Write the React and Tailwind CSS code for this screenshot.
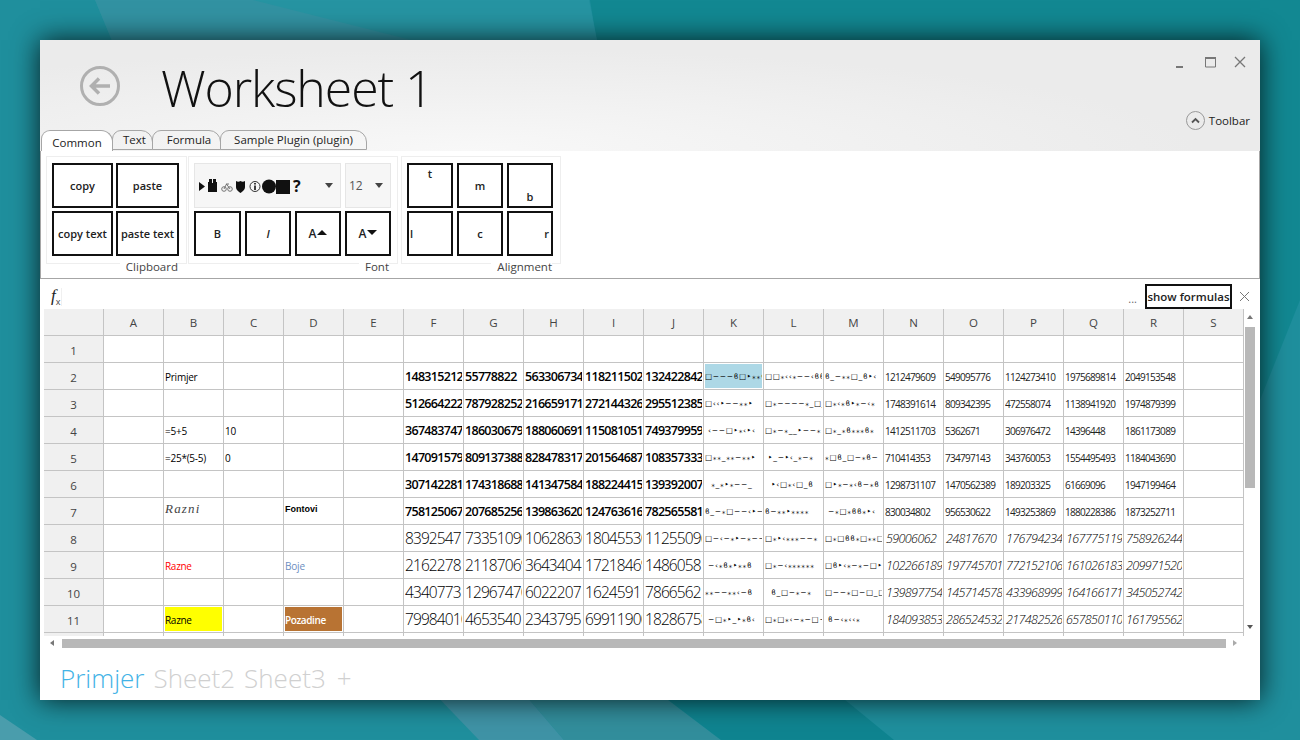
import React from "react";

const columns = ["A", "B", "C", "D", "E", "F", "G", "H", "I", "J", "K", "L", "M", "N", "O", "P", "Q", "R", "S"];

const boldNums = [
  ["1483152120", "55778822", "563306734", "1182115022", "132422842"],
  ["512664222", "787928252", "216659171", "272144326", "295512385"],
  ["367483747", "186030679", "1880606918", "1150810513", "749379959"],
  ["1470915799", "809137388", "828478317", "201564687", "108357333"],
  ["307142281", "1743186888", "141347584", "1882244153", "1393920074"],
  ["758125067", "207685256", "139863620", "1247636160", "782565581"],
];

const bigNums = [
  ["8392547", "73351090", "10628630", "18045530", "11255096"],
  ["21622781", "21187069", "3643404", "17218469", "1486058"],
  ["4340773", "12967470", "6022207", "16245911", "7866562"],
  ["79984010", "4653540", "2343795", "69911900", "18286758"],
];

const smallNums = [
  ["1212479609", "549095776", "1124273410", "1975689814", "2049153548"],
  ["1748391614", "809342395", "472558074", "1138941920", "1974879399"],
  ["1412511703", "5362671", "306976472", "14396448", "1861173089"],
  ["710414353", "734797143", "343760053", "1554495493", "1184043690"],
  ["1298731107", "1470562389", "189203325", "61669096", "1947199464"],
  ["830034802", "956530622", "1493253869", "1880228386", "1873252711"],
];

const italicNums = [
  ["59006062", "24817670", "1767942344", "1677751197", "7589262448"],
  ["1022661892", "197745701", "772152106", "1610261834", "2099715209"],
  ["1398977541", "1457145786", "433968999", "1641661713", "345052742"],
  ["1840938534", "286524532", "217482526", "657850110", "1617955623"],
];

// the K-M columns are in a symbol font in the original
const symbols = [
  ["□−−−ϐ□‣⁎⁎‣", "□□⁎‹‹⁎−−‹ϐϐ_", "ϐ_−⁎⁎□_ϐ‣‹"],
  ["□‹‹‣−−⁎⁎‣", "□⁎−−−−⁎_□_", "□⁎‹⁎ϐ‣⁎−‹⁎"],
  [" ‹−−□‣⁎‹‣‹", "□⁎−⁎__‣−−⁎", "□⁎_⁎ϐ⁎⁎⁎ϐ⁎"],
  ["□⁎⁎_⁎⁎−⁎⁎‣", " ‣_−‣‹_⁎−⁎", "⁎□ϐ_□−⁎ϐ−"],
  ["  ⁎_⁎‣⁎−−_", "  ‣‹□⁎‹□_ϐ", "□‣⁎−⁎‹ϐ−⁎ϐ"],
  ["ϐ_−⁎□−−‹‣−", "ϐ−⁎⁎‣⁎⁎⁎⁎", " −⁎□⁎ϐϐ⁎‣‹"],
  ["□−‹−⁎‣−⁎−−", "□⁎‣‹⁎⁎⁎−−⁎", "□⁎□ϐϐ⁎□⁎⁎□−"],
  [" −‹⁎ϐ⁎‣⁎⁎ϐ", "□⁎−‹⁎⁎⁎⁎⁎⁎", "□ϐ‣‹⁎−⁎−□‣"],
  ["⁎⁎−−⁎⁎‹−ϐ", "  ϐ_□−⁎−⁎", "□−−⁎□−□_□_"],
  [" −□⁎‣_‣⁎ϐ‹", "□⁎□⁎‹−⁎−□−", " ϐ−‹⁎‹‹⁎"],
];

const textCells = {
  "2-B": { text: "Primjer", className: "text-[10px] tracking-[-0.25px]" },
  "4-B": { text: "=5+5", className: "text-[10px] tracking-[-0.25px]" },
  "4-C": { text: "10", className: "text-[10px] tracking-[-0.25px]" },
  "5-B": { text: "=25*(5-5)", className: "text-[10px] tracking-[-0.25px]" },
  "5-C": { text: "0", className: "text-[10px] tracking-[-0.25px]" },
  "7-B": { text: "Razni", className: "text-[13px] italic tracking-[1.2px] text-[#444] font-['Liberation_Serif',serif] -mt-[3px]" },
  "7-D": { text: "Fontovi", className: "text-[9px] font-bold font-['Liberation_Sans',sans-serif] -mt-[2px]" },
  "9-B": { text: "Razne", className: "text-[10px] tracking-[-0.3px] text-[#ff0000]" },
  "9-D": { text: "Boje", className: "text-[10px] tracking-[-0.2px] text-[#6c8ebf]" },
  "11-B": { text: "Razne", className: "text-[10px] tracking-[-0.3px] text-black bg-[#ffff00]" },
  "11-D": { text: "Pozadine", className: "text-[10px] tracking-[-0.4px] font-semibold text-white bg-[#b87333]" },
};

function getCell(row, col) {
  const key = `${row}-${columns[col]}`;
  if (textCells[key]) return textCells[key];
  const top = row - 2;
  const low = row - 8;
  if (col >= 5 && col <= 9 && row >= 2 && row <= 7) {
    return { text: boldNums[top][col - 5], className: "text-[12.5px] tracking-[-0.7px] font-semibold text-black" };
  }
  if (col >= 5 && col <= 9 && row >= 8) {
    return { text: bigNums[low][col - 5], className: "text-[15.5px] tracking-[-0.9px] font-light text-black" };
  }
  if (col >= 10 && col <= 12 && row >= 2) {
    const cls = row === 2 && col === 10 ? "bg-[#add8e6]" : "";
    return { text: symbols[top][col - 10], className: `text-[7.5px] tracking-[0.7px] font-['DejaVu_Sans',sans-serif] ${cls}` };
  }
  if (col >= 13 && col <= 17 && row >= 2 && row <= 7) {
    return { text: smallNums[top][col - 13], className: "text-[10px] tracking-[-0.7px] text-[#222]" };
  }
  if (col >= 13 && col <= 17 && row >= 8) {
    return { text: italicNums[low][col - 13], className: "pl-[1px] text-[12.5px] tracking-[-0.6px] italic font-light text-black" };
  }
  return null;
}

function RibbonButton({ children, className = "" }) {
  return (
    <button className={`flex h-[45px] items-center justify-center border-2 border-[#111] bg-white pt-[1px] text-[11px] font-semibold text-[#222] ${className}`}>
      {children}
    </button>
  );
}

function Group({ label, className = "", children }) {
  return (
    <div className={`relative h-[108px] border border-[#eeeeee] px-[5px] pt-[6px] ${className}`}>
      {children}
      <span className="absolute bottom-[-11px] right-[8px] bg-white pl-[6px] text-[11.5px] leading-[15px] text-[#444]">{label}</span>
    </div>
  );
}

function Tab({ label, className = "" }) {
  return (
    <div className={`flex h-[20px] items-center justify-center rounded-t-[9px] rounded-tr-[12px] border border-[#a6a6a6] text-[11.5px] text-[#222] ${className}`}>
      {label}
    </div>
  );
}

function Dropdown({ className = "", children }) {
  return (
    <div className={`flex h-[45px] items-center border border-[#e6e6e6] bg-[#f6f6f6] ${className}`}>
      {children}
      <span className="ml-auto mr-[7px] h-0 w-0 border-x-[4px] border-t-[5px] border-x-transparent border-t-[#444]" />
    </div>
  );
}

function FontPreview() {
  return (
    <svg width="96" height="22" viewBox="0 0 96 22" fill="#111" className="ml-[2px]">
      <path d="M2 7v9l6-4.500z" />
      <path d="M11 7h4v1h1V7h4v10h-9z" />
      <path d="M12 4h3v3h-3zM16 4h3v3h-3z" />
      <g fill="none" stroke="#666" strokeWidth="0.9">
        <circle cx="27" cy="14" r="2.300" />
        <circle cx="33" cy="14" r="2.300" />
        <path d="M27 14l2.500-5 3.500 5M29 9h3" />
      </g>
      <path d="M39 6c1.500 1 3 1 4.500 0 1.500 1 3 1 4.500 0v6c0 3-2.500 4.500-4.500 6-2-1.500-4.500-3-4.500-6z" />
      <circle cx="58" cy="11.500" r="5" fill="none" stroke="#333" strokeWidth="1" />
      <path d="M57.200 10.500h1.600v4.500h-1.600zM57.200 8h1.600v1.600h-1.600z" />
      <circle cx="72" cy="11.500" r="7" />
      <path d="M79 5h14v14H79z" />
    </svg>
  );
}

function Triangle({ down }) {
  return (
    <span className={`ml-[1px] h-0 w-0 border-x-[5px] border-x-transparent ${down ? "border-t-[5px] border-t-[#111]" : "border-b-[5px] border-b-[#111]"} ${down ? "mb-[3px]" : "mb-[4px]"}`} />
  );
}

function Ribbon() {
  return (
    <div className="flex h-[129px] shrink-0 gap-[1px] border border-[#a6a6a6] bg-white pl-[5px] pt-[5px]">
      <Group label="Clipboard" className="w-[141px]">
        <div className="grid grid-cols-[61px_63px] gap-[3px]">
          <RibbonButton>copy</RibbonButton>
          <RibbonButton>paste</RibbonButton>
          <RibbonButton>copy text</RibbonButton>
          <RibbonButton>paste text</RibbonButton>
        </div>
      </Group>
      <Group label="Font" className="w-[210px]">
        <div className="grid grid-cols-[47px_46px_46px_46px] gap-x-[4px] gap-y-[3px]">
          <Dropdown className="col-span-3">
            <FontPreview />
            <span className="text-[16px] font-bold text-[#111]">?</span>
          </Dropdown>
          <Dropdown className="pl-[3px] text-[12px] text-[#555]">12</Dropdown>
          <RibbonButton>B</RibbonButton>
          <RibbonButton className="italic">I</RibbonButton>
          <RibbonButton className="font-normal"><span className="text-[12px]">A</span><Triangle /></RibbonButton>
          <RibbonButton className="font-normal"><span className="text-[12px]">A</span><Triangle down /></RibbonButton>
        </div>
      </Group>
      <Group label="Alignment" className="ml-[2px] w-[160px]">
        <div className="grid grid-cols-[46px_46px_46px] gap-x-[4px] gap-y-[3px]">
          <RibbonButton className="!items-start">t</RibbonButton>
          <RibbonButton>m</RibbonButton>
          <RibbonButton className="!items-end pb-[1px]">b</RibbonButton>
          <RibbonButton className="!justify-start pl-[1px]">l</RibbonButton>
          <RibbonButton>c</RibbonButton>
          <RibbonButton className="!justify-end pr-[2px]">r</RibbonButton>
        </div>
      </Group>
    </div>
  );
}

function Sheet() {
  const rows = [1, 2, 3, 4, 5, 6, 7, 8, 9, 10, 11];
  return (
    <div className="relative flex h-[327px] w-[1200px] flex-col overflow-hidden">
      <div className="flex h-[27px] shrink-0">
        <div className="h-full w-[60px] shrink-0 border-r border-b border-[#c4c4c4] bg-[#f0f0f0]" />
        {columns.map((c) => (
          <div key={c} className="flex h-full w-[60px] shrink-0 items-center justify-center border-r border-b border-[#c4c4c4] bg-[#f0f0f0] pt-[1px] text-[11.5px] text-[#444]">
            {c}
          </div>
        ))}
      </div>
      {rows.map((row) => (
        <div key={row} className="flex h-[27px] shrink-0">
          <div className="flex h-full w-[60px] shrink-0 items-center justify-center border-r border-b border-[#c4c4c4] bg-[#f0f0f0] pt-[3px] text-[11.5px] text-[#444]">
            {row}
          </div>
          {columns.map((_, i) => {
            const cell = getCell(row, i);
            return (
              <div key={i} className="h-full w-[60px] shrink-0 overflow-hidden border-r border-b border-[#c4c4c4] p-[1px]">
                {cell && (
                  <div className={`flex h-full items-center overflow-hidden whitespace-pre pt-[2px] ${cell.className}`}>{cell.text}</div>
                )}
              </div>
            );
          })}
        </div>
      ))}
      <div className="flex h-[5px] shrink-0">
        {[...Array(20)].map((_, i) => (
          <div key={i} className={`h-full w-[60px] shrink-0 border-r border-[#c4c4c4] ${i === 0 ? "bg-[#f0f0f0]" : ""}`} />
        ))}
      </div>
    </div>
  );
}

export default function App() {
  return (
    <div className="relative h-[740px] w-[1300px] overflow-hidden bg-[#1f8f9d] pl-[40px] pt-[40px] font-['Open_Sans',sans-serif]">
      <svg className="absolute inset-0" width="1300" height="740" viewBox="0 0 1300 740">
        <path d="M590 0h710v300l-40 100V60H600z" fill="#128892" />
        <path d="M95 0h494l12 60H120z" fill="#2694a2" />
        <path d="M95 0h158l237 60H120z" fill="#3292a2" />
        <path d="M0 715 37 740H0z" fill="#4a9dac" />
        <path d="M431 690h90l43 50h-85z" fill="#3f93a6" />
        <path d="M521 690h134l66 50H564z" fill="#328e9c" />
        <path d="M655 690h178l61 50H721z" fill="#0f8490" />
      </svg>
      <div className="relative flex h-[660px] w-[1220px] flex-col bg-white shadow-[0_0_26px_rgba(0,0,0,0.8)]">
        <div className="relative z-10 -mb-px h-[111px] shrink-0 bg-[radial-gradient(ellipse_at_35%_100%,#f8f8f8,#ebebeb_65%)]">
          <div className="flex h-[90px] items-start">
            <svg width="42" height="42" viewBox="0 0 42 42" className="ml-[39px] mt-[25px]" fill="none" stroke="#b0b0b0">
              <circle cx="21" cy="21" r="18.500" strokeWidth="3" />
              <path d="M31 21H13M20 13.500 12.500 21 20 28.500" strokeWidth="3.500" />
            </svg>
            <h1 className="ml-[40px] mt-[20px] text-[50px] font-light leading-[56px] tracking-[-1.1px] text-[#111]">Worksheet 1</h1>
          </div>
          <div className="absolute right-[13px] top-[15px] flex items-center gap-[16px]">
            <svg width="14" height="14" viewBox="0 0 14 14" fill="none" stroke="#777">
              <path d="M3 12h7" strokeWidth="2" />
            </svg>
            <svg width="14" height="14" viewBox="0 0 14 14" fill="none" stroke="#777">
              <path d="M2.500 3h10v9h-10z" />
              <path d="M2 3h11" strokeWidth="2" />
            </svg>
            <svg width="14" height="14" viewBox="0 0 14 14" fill="none" stroke="#777" strokeWidth="1.300">
              <path d="M2 2l10 10M12 2 2 12" />
            </svg>
          </div>
          <div className="absolute right-[10px] top-[71px] flex items-center gap-[4px]">
            <div className="flex h-[19px] w-[19px] items-center justify-center rounded-full border border-[#999]">
              <svg width="9" height="7" viewBox="0 0 9 7" fill="none" stroke="#555" strokeWidth="1.800">
                <path d="M1 5.500 4.500 2 8 5.500" />
              </svg>
            </div>
            <span className="text-[11.5px] text-[#222]">Toolbar</span>
          </div>
          <div className="flex items-start pl-[1px]">
            <Tab label="Common" className="relative z-10 h-[21px] w-[72px] border-b-0 bg-white pt-[3px]" />
            <Tab label="Text" className="-ml-px w-[41px] pl-[4px]" />
            <Tab label="Formula" className="-ml-px w-[69px] pl-[5px]" />
            <Tab label="Sample Plugin (plugin)" className="-ml-px w-[147px]" />
          </div>
        </div>
        <Ribbon />
        <div className="flex h-[30px] shrink-0 items-end bg-white pl-[11px] pr-[10px]">
          <span className="mb-[1px] font-['Liberation_Serif',serif] text-[17px] italic text-[#222]">f</span>
          <span className="mb-[1px] text-[9px] text-[#444]">x</span>
          <span className="mb-[3px] ml-[1px] h-[18px] w-px bg-[#f0f0f0]" />
          <span className="mb-[2px] ml-auto mr-[8px] text-[11px] text-[#666]">...</span>
          <button className="h-[25px] w-[87px] border-2 border-[#111] text-[11.5px] font-semibold text-[#222]">show formulas</button>
          <svg width="11" height="11" viewBox="0 0 11 11" fill="none" stroke="#777" className="mb-[7px] ml-[7px]">
            <path d="M1 1l9 9M10 1 1 10" />
          </svg>
        </div>
        <div className="flex shrink-0 pl-[4px]">
          <Sheet />
          <div className="relative ml-[1px] w-[10px]">
            <span className="absolute left-[2px] top-[6px] h-0 w-0 border-x-[3px] border-b-[4px] border-x-transparent border-b-[#777]" />
            <div className="absolute left-0 top-[18px] h-[161px] w-[10px] bg-[#b8b8b8]" />
            <span className="absolute left-[2px] top-[316px] h-0 w-0 border-x-[3px] border-t-[4px] border-x-transparent border-t-[#555]" />
          </div>
        </div>
        <div className="relative mt-[2px] flex h-[10px] shrink-0 items-center pl-[10px] pr-[22px]">
          <span className="h-0 w-0 border-y-[3px] border-r-[4px] border-y-transparent border-r-[#777]" />
          <div className="ml-[8px] h-[9px] w-[1164px] bg-[#b8b8b8]" />
          <span className="ml-[7px] h-0 w-0 border-y-[3px] border-l-[4px] border-y-transparent border-l-[#aaa]" />
        </div>
        <div className="flex items-center gap-[9px] pl-[20px] pt-[12px] text-[26px] font-light leading-[36px] text-[#d0d0d0]">
          <span className="text-[#43b3e6]">Primjer</span>
          <span>Sheet2</span>
          <span>Sheet3</span>
          <span className="ml-[2px]">+</span>
        </div>
      </div>
    </div>
  );
}
